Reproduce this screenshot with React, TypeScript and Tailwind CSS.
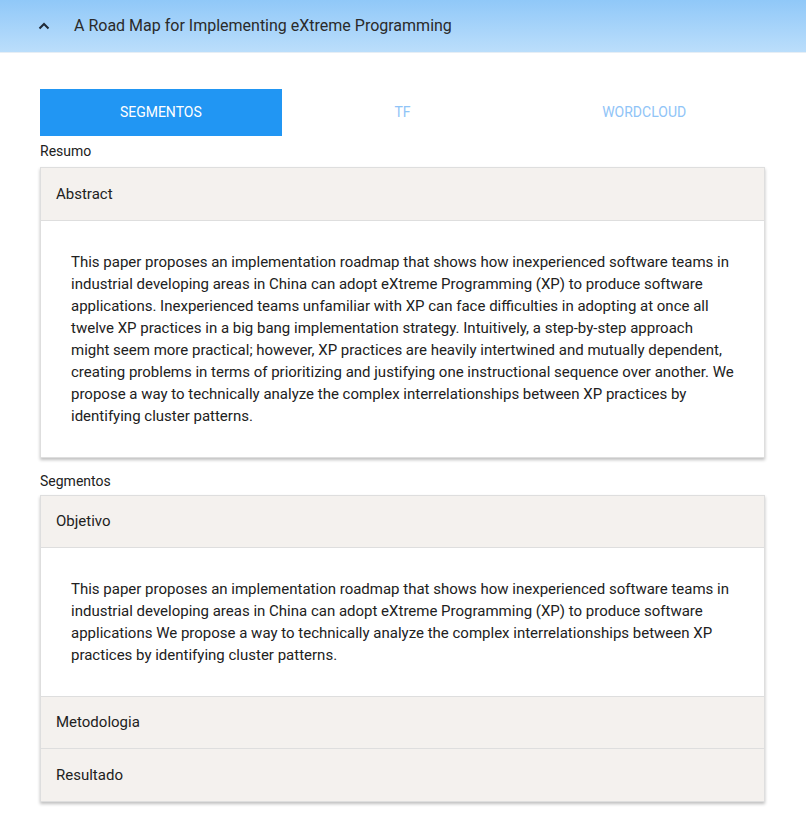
import React from "react";

const abstract =
  "This paper proposes an implementation roadmap that shows how inexperienced software teams in industrial developing areas in China can adopt eXtreme Programming (XP) to produce software applications. Inexperienced teams unfamiliar with XP can face difficulties in adopting at once all twelve XP practices in a big bang implementation strategy. Intuitively, a step-by-step approach might seem more practical; however, XP practices are heavily intertwined and mutually dependent, creating problems in terms of prioritizing and justifying one instructional sequence over another. We propose a way to technically analyze the complex interrelationships between XP practices by identifying cluster patterns.";

const objetivo =
  "This paper proposes an implementation roadmap that shows how inexperienced software teams in industrial developing areas in China can adopt eXtreme Programming (XP) to produce software applications We propose a way to technically analyze the complex interrelationships between XP practices by identifying cluster patterns.";

function SectionHeader({ label, last, first }: { label: string; last?: boolean; first?: boolean }) {
  return (
    <div
      className={`${first ? "h-[53px]" : "h-[52px]"} flex items-center px-[15px] bg-[#f4f1ee] text-[15px] text-[#212121] ${
        last ? "" : "border-b border-[#dedede]"
      }`}
    >
      {label}
    </div>
  );
}

function Body({ text, bottomBorder }: { text: string; bottomBorder?: boolean }) {
  return (
    <div
      className={`bg-white pl-[30px] pr-[30px] ${bottomBorder ? "border-b border-[#dedede]" : ""}`}
    >
      <p className="text-[15px] leading-[22px] text-[#212121] pt-[30px] pb-[30px]">{text}</p>
    </div>
  );
}

export default function App() {
  return (
    <div
      className="w-[806px] min-h-[818px] bg-white"
      style={{ fontFamily: "Roboto, 'Liberation Sans', sans-serif" }}
    >
      <div className="h-[53px] bg-gradient-to-b from-[#90c8f8] to-[#bbdefb] flex items-center border-b border-[#e6eef5]">
        <svg width="12" height="8" viewBox="0 0 12 8" className="ml-[38px] mr-[24px]">
          <path d="M1.5 6.5 L6 2 L10.5 6.5" fill="none" stroke="#1f2a37" strokeWidth="2" />
        </svg>
        <span className="text-[16px] text-[#2a2a2a]">A Road Map for Implementing eXtreme Programming</span>
      </div>

      <div className="pl-[40px] pr-[41px] pt-[36px]">
        <div className="grid grid-cols-3 h-[47px] text-[14px] font-normal uppercase">
          <div className="bg-[#2196f3] text-white flex items-center justify-center">Segmentos</div>
          <div className="text-[#90c4f7] flex items-center justify-center">TF</div>
          <div className="text-[#90c4f7] flex items-center justify-center">Wordcloud</div>
        </div>

        <div className="text-[14px] text-[#212121] h-[31px] flex items-center pb-[1px]">Resumo</div>
        <div className="border border-[#dedede] shadow-[0_2px_3px_rgba(0,0,0,0.25)]">
          <SectionHeader label="Abstract" first />
          <div className="bg-white pl-[30px] pr-[30px]">
            <p className="text-[15px] leading-[22px] text-[#212121] pt-[30px] pb-[30px]">{abstract}</p>
          </div>
        </div>

        <div className="text-[14px] text-[#212121] h-[37px] flex items-center pt-[10px]">Segmentos</div>
        <div className="border border-[#dedede] shadow-[0_2px_3px_rgba(0,0,0,0.25)]">
          <SectionHeader label="Objetivo" />
          <Body text={objetivo} bottomBorder />
          <SectionHeader label="Metodologia" />
          <SectionHeader label="Resultado" last />
        </div>
      </div>
    </div>
  );
}
